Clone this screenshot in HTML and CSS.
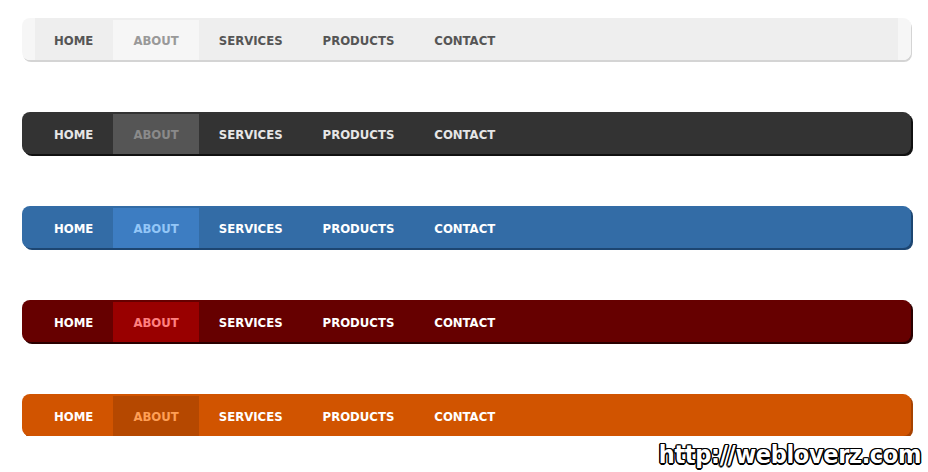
FILE: index.html
```html
<!DOCTYPE html>
<html>
<head>
<meta charset="utf-8">
<link rel="stylesheet" href="styles.css">
</head>
<body>
<div class="page">
  <nav class="menu light">
    <ul>
      <li><a href="#">Home</a></li>
      <li class="active"><a href="#">About</a></li>
      <li><a href="#">Services</a></li>
      <li><a href="#">Products</a></li>
      <li><a href="#">Contact</a></li>
    </ul>
  </nav>
  <nav class="menu dark">
    <ul>
      <li><a href="#">Home</a></li>
      <li class="active"><a href="#">About</a></li>
      <li><a href="#">Services</a></li>
      <li><a href="#">Products</a></li>
      <li><a href="#">Contact</a></li>
    </ul>
  </nav>
  <nav class="menu blue">
    <ul>
      <li><a href="#">Home</a></li>
      <li class="active"><a href="#">About</a></li>
      <li><a href="#">Services</a></li>
      <li><a href="#">Products</a></li>
      <li><a href="#">Contact</a></li>
    </ul>
  </nav>
  <nav class="menu red">
    <ul>
      <li><a href="#">Home</a></li>
      <li class="active"><a href="#">About</a></li>
      <li><a href="#">Services</a></li>
      <li><a href="#">Products</a></li>
      <li><a href="#">Contact</a></li>
    </ul>
  </nav>
  <nav class="menu orange">
    <ul>
      <li><a href="#">Home</a></li>
      <li class="active"><a href="#">About</a></li>
      <li><a href="#">Services</a></li>
      <li><a href="#">Products</a></li>
      <li><a href="#">Contact</a></li>
    </ul>
  </nav>
</div>
<div class="watermark">http://webloverz.com</div>
</body>
</html>
```
FILE: styles.css
```css
html, body {
  margin: 0;
  padding: 0;
  background: #ffffff;
}
.page {
  padding: 18px 0 0 22px;
  display: flex;
  flex-direction: column;
  gap: 52px;
}
.menu {
  width: 889px;
  height: 42px;
  border-radius: 8px;
  box-sizing: border-box;
  padding-top: 2px;
  overflow: hidden;
}
.menu ul {
  list-style: none;
  margin: 0;
  padding: 0 0 0 12px;
  display: flex;
  height: 40px;
}
.menu li a {
  display: block;
  padding: 1px 20px 0;
  line-height: 40px;
  height: 40px;
  box-sizing: border-box;
  font-family: "DejaVu Sans Condensed", "DejaVu Sans", sans-serif;
  font-stretch: condensed;
  font-weight: bold;
  font-size: 13px;
  text-transform: uppercase;
  text-decoration: none;
}
.light {
  background: linear-gradient(to right, #f6f6f6 0, #f6f6f6 13px, #eeeeee 13px, #eeeeee 876px, #f6f6f6 876px);
  box-shadow: 1px 2px 0 #d4d4d4;
}
.light li a { color: #555555; }
.light li.active a { background: #f6f6f6; color: #999999; }

.dark {
  background: #333333;
  box-shadow: 2px 2px 0 #111111;
}
.dark li a { color: #e6e6e6; }
.dark li.active a { background: #555555; color: #8a8a8a; }

.blue {
  background: #336ca6;
  box-shadow: 2px 2px 0 #1d4672;
}
.blue li a { color: #ffffff; }
.blue li.active a { background: #3d7dc2; color: #93c6f7; }

.red {
  background: #660000;
  box-shadow: 2px 2px 0 #2a0000;
}
.red li a { color: #ffffff; }
.red li.active a { background: #990000; color: #ff8080; }

.orange {
  background: #d15400;
  box-shadow: 2px 2px 0 #a64200;
}
.orange li a { color: #ffffff; }
.orange li.active a { background: #b54800; color: #ff9f55; }

.watermark {
  position: absolute;
  right: 7px;
  bottom: 3px;
  font-family: "DejaVu Sans Condensed", "DejaVu Sans", sans-serif;
  font-stretch: condensed;
  font-weight: bold;
  font-size: 25px;
  letter-spacing: -0.35px;
  color: #ffffff;
  text-shadow: -1.5px 0 #000, 1.5px 0 #000, 0 -1.5px #000, 0 1.5px #000, -1px -1px #000, 1px 1px #000, -1px 1px #000, 1px -1px #000;
}
```
